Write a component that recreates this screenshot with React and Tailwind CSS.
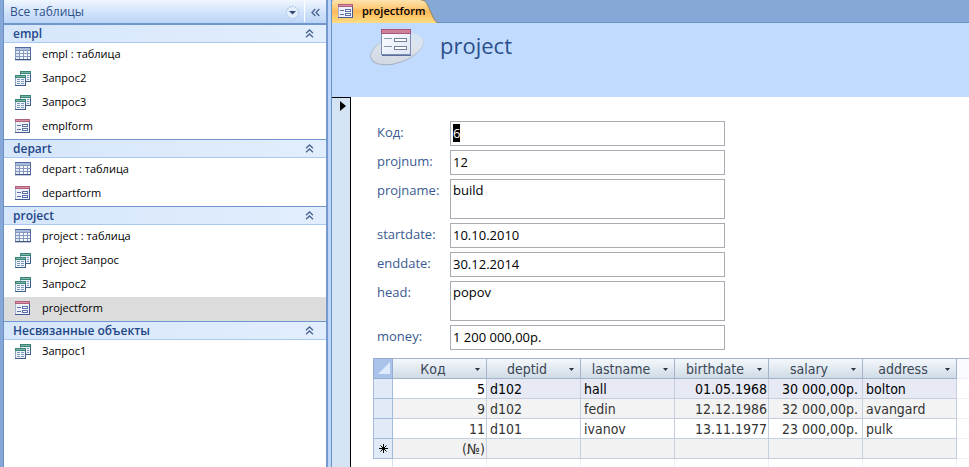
import React, { useEffect, useRef, useState } from "react";

const groups = [
  {
    title: "empl",
    items: [
      { type: "table", label: "empl : таблица" },
      { type: "query", label: "Запрос2" },
      { type: "query", label: "Запрос3" },
      { type: "form", label: "emplform" },
    ],
  },
  {
    title: "depart",
    items: [
      { type: "table", label: "depart : таблица" },
      { type: "form", label: "departform" },
    ],
  },
  {
    title: "project",
    items: [
      { type: "table", label: "project : таблица" },
      { type: "query", label: "project Запрос" },
      { type: "query", label: "Запрос2" },
      { type: "form", label: "projectform" },
    ],
  },
  {
    title: "Несвязанные объекты",
    items: [{ type: "query", label: "Запрос1" }],
  },
];

const fields = [
  { name: "Код", value: "6" },
  { name: "projnum", value: "12" },
  { name: "projname", value: "build", tall: true },
  { name: "startdate", value: "10.10.2010" },
  { name: "enddate", value: "30.12.2014" },
  { name: "head", value: "popov", tall: true },
  { name: "money", value: "1 200 000,00р." },
];

const columns = ["Код", "deptid", "lastname", "birthdate", "salary", "address"];

const cellStyles = {
  Код: "pr-px text-right",
  deptid: "pl-[3px]",
  lastname: "pl-[3px]",
  birthdate: "pr-px text-right",
  salary: "pr-1 text-right",
  address: "pl-[3px]",
};

const rows = [
  ["5", "d102", "hall", "01.05.1968", "30 000,00р.", "bolton"],
  ["9", "d102", "fedin", "12.12.1986", "32 000,00р.", "avangard"],
  ["11", "d101", "ivanov", "13.11.1977", "23 000,00р.", "pulk"],
];

const TableIcon = () => (
  <svg width="16" height="14" viewBox="0 0 16 14" shapeRendering="crispEdges">
    <rect width="16" height="13" fill="#8598bd" />
    <rect width="16" height="1" fill="#4f6a9e" />
    <rect x="15" width="1" height="13" fill="#4f6a9e" />
    <rect x="1" y="1" width="14" height="2" fill="#a9bbdc" />
    {[3, 6, 9].map((y) =>
      [1, 5, 9, 13].map((x) => (
        <rect
          key={`${x}-${y}`}
          x={x}
          y={y + 1}
          width={x === 13 ? 2 : 3}
          height="2"
          fill={x === 1 ? "#dfe7f4" : "#f7f9fd"}
        />
      ))
    )}
    <rect y="12" width="16" height="1" fill="#3d5485" />
    <rect y="13" width="16" height="1" fill="#c3ccdc" />
  </svg>
);

const QueryIcon = () => (
  <svg width="16" height="15" viewBox="0 0 16 15" shapeRendering="crispEdges">
    <rect x="5" y="0" width="11" height="11" fill="#8ba1bd" />
    <rect x="15" y="0" width="1" height="11" fill="#3f5f88" />
    <rect x="5" y="10" width="11" height="1" fill="#3f5f88" />
    <rect x="5" y="0" width="11" height="3" fill="#3b8577" />
    <rect x="6" y="1" width="9" height="1" fill="#76b5a8" />
    <rect x="6" y="3" width="9" height="7" fill="#eef3f9" />
    <rect x="12" y="4" width="2" height="1" fill="#7d9abf" />
    <rect x="12" y="6" width="2" height="1" fill="#7d9abf" />
    <rect x="12" y="8" width="2" height="1" fill="#7d9abf" />
    <rect x="0" y="4" width="11" height="11" fill="#8ba1bd" />
    <rect x="10" y="4" width="1" height="11" fill="#3f5f88" />
    <rect x="0" y="14" width="11" height="1" fill="#3f5f88" />
    <rect x="0" y="4" width="11" height="3" fill="#3b8577" />
    <rect x="1" y="5" width="9" height="1" fill="#76b5a8" />
    <rect x="1" y="7" width="9" height="7" fill="#eef3f9" />
    {[8, 10, 12].map((y) => (
      <g key={y} fill="#7d9abf">
        <rect x="2" y={y} width="3" height="1" />
        <rect x="6" y={y} width="3" height="1" />
      </g>
    ))}
  </svg>
);

const FormIcon = () => (
  <svg width="15" height="14" viewBox="0 0 15 14" shapeRendering="crispEdges">
    <rect width="15" height="14" fill="#a9b4cf" />
    <rect x="14" width="1" height="14" fill="#435b92" />
    <rect y="13" width="15" height="1" fill="#435b92" />
    <rect width="15" height="3" fill="#b0607c" />
    <rect x="1" y="1" width="13" height="1" fill="#d690a8" />
    <rect x="1" y="3" width="13" height="10" fill="#eef1fa" />
    <rect x="2" y="6" width="4" height="1" fill="#5a70a6" />
    <rect x="2" y="10" width="4" height="1" fill="#5a70a6" />
    <rect x="7" y="5" width="6" height="3" fill="#5a70a6" />
    <rect x="8" y="6" width="4" height="1" fill="#fff" />
    <rect x="7" y="9" width="6" height="3" fill="#5a70a6" />
    <rect x="8" y="10" width="4" height="1" fill="#fff" />
  </svg>
);

const icons = { table: TableIcon, query: QueryIcon, form: FormIcon };

const FormLogo = () => (
  <svg width="54" height="40" viewBox="0 0 54 40">
    <defs>
      <linearGradient id="disc" x1="0" y1="1" x2="1" y2="0">
        <stop offset="0" stopColor="#cfd5de" />
        <stop offset="0.6" stopColor="#dde4ee" />
        <stop offset="1" stopColor="#d3e4fb" />
      </linearGradient>
      <linearGradient id="rim" x1="0" y1="1" x2="1" y2="0">
        <stop offset="0" stopColor="#98a1b0" />
        <stop offset="0.6" stopColor="#c3cddb" />
        <stop offset="1" stopColor="#dcebff" />
      </linearGradient>
      <linearGradient id="sheet" x1="0" y1="0" x2="1" y2="1">
        <stop offset="0" stopColor="#ffffff" />
        <stop offset="1" stopColor="#dde4f2" />
      </linearGradient>
    </defs>
    <ellipse
      cx="27"
      cy="22"
      rx="27.5"
      ry="13.500"
      transform="rotate(-20 27 22)"
      fill="url(#disc)"
      stroke="url(#rim)"
    />
    <rect x="12" y="3" width="29" height="26" fill="#5b6f9c" />
    <rect x="11.5" y="2.5" width="29" height="25" fill="url(#sheet)" stroke="#7c8db3" />
    <rect x="11" y="2" width="30" height="5" fill="#a8557a" />
    <rect x="12" y="3" width="28" height="3" fill="#cc8099" />
    <path d="M14 11.5h8M14 19.5h8" stroke="#8a97b0" />
    <rect x="24.5" y="11.5" width="12" height="3" fill="#fff" stroke="#71809f" />
    <rect x="24.5" y="19.5" width="12" height="3" fill="#fff" stroke="#71809f" />
  </svg>
);

const DoubleUp = () => (
  <svg width="9" height="9" viewBox="0 0 9 9" fill="none" stroke="#4a6490">
    <path d="M1 4.3 4.5 1 8 4.3M1 8.3 4.5 5 8 8.3" strokeWidth="1.3" />
  </svg>
);

const DoubleLeft = () => (
  <svg width="9" height="9" viewBox="0 0 9 9" fill="none" stroke="#4a6490">
    <path d="M4.3 1 1 4.5 4.3 8M8.3 1 5 4.5 8.3 8" strokeWidth="1.3" />
  </svg>
);

function NavPane() {
  const [active, setActive] = useState("projectform");

  return (
    <nav className="w-[324px] shrink-0 border-r-2 border-[#7399cf] bg-white">
      <div className="flex h-[25px] items-center border-b-2 border-[#7196c9] bg-linear-to-b from-[#f0f6fe] via-[#d3e4fb] to-[#bcd5f7] pt-px pl-1.5">
        <span className="flex-1 text-[12px] leading-5 text-[#2f5189]">Все таблицы</span>
        <button aria-label="Фильтр" className="flex w-6 justify-center">
          <svg width="13" height="13" viewBox="0 0 13 13">
            <circle cx="6.5" cy="6.5" r="6" fill="#e3eefc" stroke="#a9c0e0" strokeDasharray="2 1" />
            <path d="M3 5h7L6.5 8.500z" fill="#34496f" />
          </svg>
        </button>
        <button
          aria-label="Свернуть"
          className="flex h-5 w-[22px] items-center justify-center border-l border-white"
        >
          <DoubleLeft />
        </button>
      </div>

      {groups.map((group, index) => (
        <section key={group.title}>
          <h2
            className={`flex items-center justify-between border-b border-[#a9c9f2] bg-linear-to-r from-[#d6e6fb] to-[#e2eefd] pr-3 pl-[9px] text-[12px] leading-4 font-semibold text-[#1f4787] ${
              index > 0 ? "h-[19px] border-t border-t-[#6f96cc]" : "h-[18px]"
            }`}
          >
            {group.title}
            <button aria-label={`Свернуть ${group.title}`}>
              <DoubleUp />
            </button>
          </h2>
          <ul>
            {group.items.map((item) => {
              const Icon = icons[item.type];
              return (
                <li key={item.label}>
                  <button
                    onClick={() => setActive(item.label)}
                    className={`flex h-6 w-full items-center pb-0.5 pl-[11px] text-left text-[11px] leading-4 text-black ${
                      active === item.label ? "bg-[#dcdcdc]" : ""
                    }`}
                  >
                    <span className="w-[27px]">
                      <Icon />
                    </span>
                    {item.label}
                  </button>
                </li>
              );
            })}
          </ul>
        </section>
      ))}
    </nav>
  );
}

function Field({ name, value, tall, inputRef }) {
  const box =
    "w-[275px] resize-none border border-[#a9acb2] bg-white px-0.5 text-[13px] text-black outline-none selection:bg-black selection:text-white";

  return (
    <div className="flex items-start">
      <label htmlFor={name} className="w-[73px] text-[13px] leading-[22px] text-[#3a5a92]">
        {name}:
      </label>
      {tall ? (
        <textarea
          id={name}
          defaultValue={value}
          className={`${box} h-10 overflow-hidden leading-5`}
        />
      ) : (
        <input
          id={name}
          ref={inputRef}
          defaultValue={value}
          className={`${box} h-[25px] pb-0.5 leading-5`}
        />
      )}
    </div>
  );
}

function DataSheet() {
  const line = "border-r border-b border-[#c6cfde]";

  return (
    <table className="mt-2 w-full table-fixed border-separate border-spacing-0 font-['DejaVu_Sans_Condensed','Open_Sans',sans-serif] text-[14px] leading-[18px] text-[#333333]">
      <colgroup>
        <col className="w-5" />
        {columns.map((c) => (
          <col key={c} className="w-[94px]" />
        ))}
        <col />
      </colgroup>
      <thead>
        <tr className="h-[21px]">
          <th className="border border-[#93acd0] bg-[#a9c3ea] p-0">
            <svg className="ml-auto" width="15" height="15" viewBox="0 0 15 15">
              <path d="M13 1v12H1z" fill="#dfeafa" />
            </svg>
          </th>
          {columns.map((c) => (
            <th
              key={c}
              scope="col"
              className="border-t border-r border-b border-[#a3b3c9] bg-linear-to-b from-[#f4f8fc] to-[#cfdbe6] px-0 pt-px pb-0 font-normal text-[#3b4654]"
            >
              <div className="flex items-center">
                <span className="flex-1 text-center">{c}</span>
                <button aria-label={`Сортировка ${c}`} className="w-[13px]">
                  <svg className="mr-1.5 ml-auto" width="5" height="3" viewBox="0 0 5 3">
                    <path d="M0 0h5L2.500 3z" fill="#2b3442" />
                  </svg>
                </button>
              </div>
            </th>
          ))}
          <td className="border-t border-b border-t-[#a3b3c9] border-b-[#edf1f8] bg-[#f8faff] p-0" />
        </tr>
      </thead>
      <tbody>
        {rows.map((row, r) => (
          <tr
            key={row[0]}
            className={`h-5 ${r === 0 ? "bg-[#e7eaf5] text-black" : r % 2 ? "bg-[#f3f3f3]" : "bg-white"}`}
          >
            <td className="border-r border-b border-l border-[#a5bbdc] bg-[#e1eaf7] p-0" />
            {row.map((cell, i) => (
              <td
                key={columns[i]}
                className={`${line} ${cellStyles[columns[i]]} pt-px whitespace-nowrap ${
                  r === 0 && i === 0 ? "bg-white" : ""
                }`}
              >
                {cell}
              </td>
            ))}
            <td className="border-b border-[#edf1f8] bg-white p-0" />
          </tr>
        ))}
        <tr className="h-5 bg-[#f2f2f2]">
          <td className="border-r border-b border-l border-[#a5bbdc] bg-[#e1eaf7] p-0">
            <svg className="mx-auto" width="9" height="9" viewBox="0 0 9 9" stroke="#000">
              <path d="M4.500 0v9M0 4.500h9M1.500 1.500l6 6M7.500 1.500l-6 6" />
            </svg>
          </td>
          <td className={`${line} pt-px pr-px text-right`}>(№)</td>
          {columns.slice(1).map((c) => (
            <td key={c} className={`${line} p-0`} />
          ))}
          <td className="border-b border-[#edf1f8] bg-white p-0" />
        </tr>
        {/* empty grid below the new-record row */}
        <tr className="h-2">
          <td className="border-r border-[#d5dfee] p-0" />
          {columns.map((c) => (
            <td key={c} className="border-r border-[#edf1f8] p-0" />
          ))}
          <td className="p-0" />
        </tr>
      </tbody>
    </table>
  );
}

export default function App() {
  const firstField = useRef(null);

  useEffect(() => {
    firstField.current.focus();
    firstField.current.select();
  }, []);

  return (
    <div className="flex min-h-screen bg-[#bcd6fb] font-['Open_Sans','Noto_Sans',sans-serif]">
      <div className="w-1 shrink-0 border-r border-[#6c90c6] bg-[#86a8d8]" />
      <NavPane />

      <main className="ml-[3px] flex min-w-0 flex-1 flex-col border-l border-[#6c93c8]">
        <div className="flex h-[23px] border-b border-[#6d93c3] bg-[#86a8d6]">
          <button className="relative flex w-[106px] items-center pl-1.5 text-left">
            <svg className="absolute top-0 left-0" width="106" height="23" viewBox="0 0 106 23">
              <defs>
                <linearGradient id="tab" x1="0" y1="0" x2="0" y2="1">
                  <stop offset="0" stopColor="#fde3ae" />
                  <stop offset="0.35" stopColor="#fdcb78" />
                  <stop offset="0.5" stopColor="#fdb95a" />
                  <stop offset="1" stopColor="#ffdc84" />
                </linearGradient>
              </defs>
              <path
                d="M0 23V2Q0 0 2 0H89C94 0 95 4 97 8L101 17Q103 22 106 23z"
                fill="url(#tab)"
              />
              <path d="M89 0C94 0 95 4 97 8L101 17Q103 22 106 23" fill="none" stroke="#8d8466" />
            </svg>
            <span className="relative w-6">
              <FormIcon />
            </span>
            <span className="relative text-[11px] leading-4 font-semibold text-black">
              projectform
            </span>
          </button>
        </div>

        <header className="flex h-[74px] items-start bg-[#c1dbff] pt-1 pl-[38px]">
          <FormLogo />
          <h1 className="ml-4 text-[22px] leading-9 text-[#2a4f8c]">project</h1>
        </header>

        <div className="flex flex-1">
          <div className="w-[19px] shrink-0 border-t border-r border-black bg-[#d5e4f4]">
            <svg className="mt-[3px] ml-2" width="6" height="10" viewBox="0 0 6 10">
              <path d="M0 0v10l6-5z" fill="#000" />
            </svg>
          </div>
          <div className="min-w-0 flex-1 bg-white pt-6 pl-[22px]">
            <form className="flex flex-col gap-1 pl-1">
              {fields.map((f, i) => (
                <Field key={f.name} {...f} inputRef={i === 0 ? firstField : undefined} />
              ))}
            </form>
            <DataSheet />
          </div>
        </div>
      </main>
    </div>
  );
}
